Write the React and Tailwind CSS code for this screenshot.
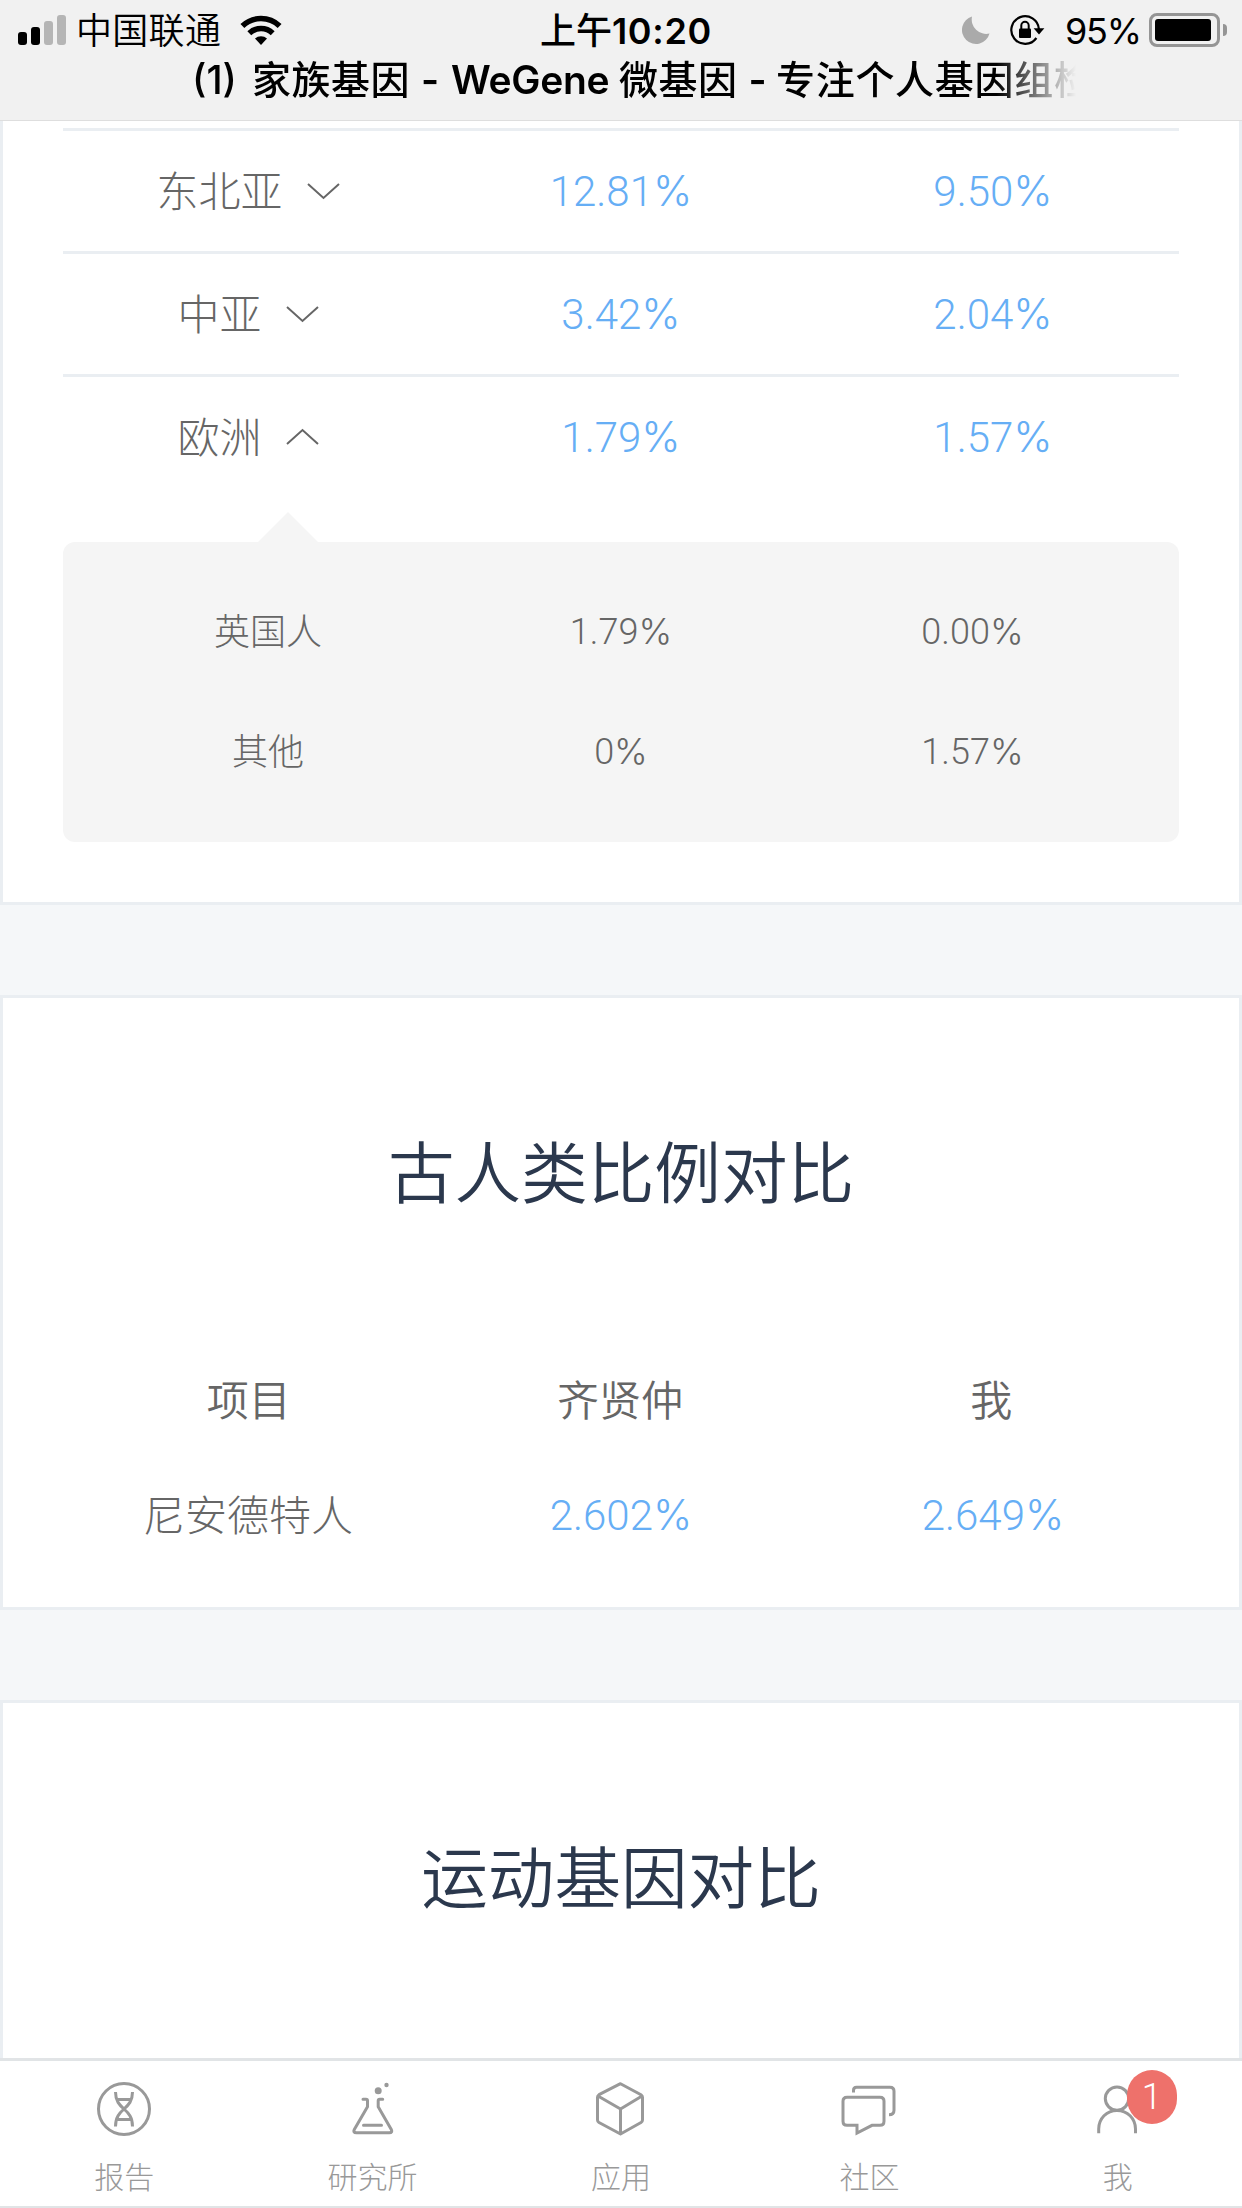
const CJK = "font-['Roboto','Noto_Sans_CJK_SC',sans-serif]";

const regions = [
  { name: '东北亚', a: '12.81', b: '9.50', open: false },
  { name: '中亚', a: '3.42', b: '2.04', open: false },
  { name: '欧洲', a: '1.79', b: '1.57', open: true },
];

const details = [
  { name: '英国人', a: '1.79', b: '0.00' },
  { name: '其他', a: '0', b: '1.57' },
];

function Chevron({ up }) {
  return (
    <svg width="33" height="18" viewBox="0 0 33 18" fill="none" stroke="#666" strokeWidth="2" className="mb-[4px] ml-6">
      <path d={up ? 'M1 16 16.5 2 32 16' : 'M1 2 16.5 16 32 2'} />
    </svg>
  );
}

function Percent({ value }) {
  return (
    <span>
      {value}
      <span className="font-['Inter',sans-serif]">%</span>
    </span>
  );
}

function SignalBars() {
  return (
    <div className="flex h-[30px] items-end gap-1">
      <span className="h-[13px] w-[9px] rounded-[3px] bg-black" />
      <span className="h-[18px] w-[9px] rounded-[3px] bg-black" />
      <span className="h-6 w-[9px] rounded-[3px] bg-[#b5b5b5]" />
      <span className="h-[30px] w-[9px] rounded-[3px] bg-[#b5b5b5]" />
    </div>
  );
}

function Wifi() {
  return (
    <svg width="42" height="30" viewBox="0 0 42 30">
      <path d="M21 30 15 23.6a8.6 8.6 0 0 1 12 0Z" />
      <g fill="none" stroke="#000" strokeWidth="5.6">
        <path d="M9.3 18.2a17 17 0 0 1 23.4 0" />
        <path d="M2.4 11a27 27 0 0 1 37.2 0" />
      </g>
    </svg>
  );
}

function Moon() {
  return (
    <svg width="28" height="28" viewBox="0 0 28 28">
      <path fill="#aaa" d="M10 0.5A14 14 0 1 0 27.500 17.500 14.500 14.500 0 0 1 10 0.5Z" />
    </svg>
  );
}

function RotationLock() {
  return (
    <svg width="35" height="30" viewBox="0 0 35 30" fill="none" stroke="#000">
      <path strokeWidth="2.2" d="M28.9 14A13.8 13.8 0 1 0 26.4 23" />
      <path fill="#000" stroke="none" d="M23.6 13.3h10.8L29 19.6Z" />
      <rect x="9" y="13.6" width="12" height="9.4" rx="1" fill="#000" stroke="none" />
      <path strokeWidth="2" d="M11.3 14v-3.5a3.7 3.7 0 0 1 7.4 0V14" />
    </svg>
  );
}

function Battery() {
  return (
    <div className="flex items-center gap-[3px]">
      <div className="h-[34px] w-[71px] rounded-[8px] border-[3px] border-[#959595] p-[3px]">
        <div className="h-full w-[56px] rounded-[3px] bg-black" />
      </div>
      <div className="h-3 w-1 rounded-r-full bg-[#959595]" />
    </div>
  );
}

function StatusBar() {
  return (
    <div className="flex h-[60px] items-center justify-between pr-[15px] pl-[18px]">
      <div className="flex flex-1 items-center">
        <SignalBars />
        <span className="mt-[3px] ml-[10px] text-[36px] font-[350] leading-[60px] tracking-[0.3px]">中国联通</span>
        <span className="ml-[19px]"><Wifi /></span>
      </div>
      <div className="mt-[2px] pl-[7px] font-['Inter','Noto_Sans_CJK_SC',sans-serif] text-[36px] font-medium leading-[60px]">
        上午<span className="font-semibold tracking-[0.7px]">10:20</span>
      </div>
      <div className="flex flex-1 items-center justify-end">
        <Moon />
        <span className="ml-[20px]"><RotationLock /></span>
        <span className="mt-[2px] ml-[20px] w-[84px] font-['Inter',sans-serif] text-[36px] leading-[60px] tracking-[-1.2px]">95%</span>
        <Battery />
      </div>
    </div>
  );
}

function Row({ name, a, b, children, className }) {
  return (
    <div className={`grid grid-cols-3 items-center text-center ${className}`}>
      <div className="flex items-center justify-center pt-[3px] pr-[2px]">{name}{children}</div>
      <div className="text-[#66aef5]"><Percent value={a} /></div>
      <div className="text-[#66aef5]"><Percent value={b} /></div>
    </div>
  );
}

const tabs = [
  {
    label: '报告',
    icon: (
      <>
        <circle cx="30" cy="30" r="25.5" />
        <path d="M21.5 13c0 9 4 13 8.5 17s8.5 8 8.5 17.5M38.5 13c0 9-4 13-8.5 17s-8.5 8-8.5 17.5M23 20.5h14M23 40.5h14" />
      </>
    ),
  },
  {
    label: '研究所',
    icon: (
      <>
        <path strokeLinecap="round" strokeLinejoin="round" d="M20 20.3h3q1.500 0 1.500 1.500v6L11.300 50.500q-1.500 3.200 2 3.200h33q3.500 0 2-3.200L35.200 27.800v-6q0-1.500 1.500-1.500h3M20.500 46.300h18" />
        <circle cx="35.200" cy="11.700" r="3.500" fill="#999" stroke="none" />
        <circle cx="43.500" cy="6" r="2.200" fill="#999" stroke="none" />
      </>
    ),
  },
  {
    label: '应用',
    icon: (
      <path strokeLinejoin="round" d="M29.500 4.700 50 15.700q1.500 1 1.500 2.500V41q0 1.500-1.500 2.500L29.500 55 8 43.500Q6.500 42.500 6.500 41V18.200q0-1.500 1.500-2.500ZM7 17l22.500 13L51 17M29.500 30v25" />
    ),
  },
  {
    label: '社区',
    icon: (
      <path d="M8 18.300h33q4 0 4 4v20q0 4-4 4h-8L18 54v-7.700H8q-4 0-4-4v-20q0-4 4-4ZM14.500 13.500V11.200q0-3 3-3h33.500q4 0 4 4v19q0 4.500-5 4.500" />
    ),
  },
  {
    label: '我',
    badge: '1',
    icon: (
      <>
        <circle cx="29" cy="19.600" r="11.700" />
        <path d="M10.700 54.300V50c0-10.500 8-18.600 18.300-18.600S47.500 39.500 47.500 50v4.300" />
      </>
    ),
  },
];

function TabBar() {
  return (
    <nav className="grid h-[150px] shrink-0 grid-cols-5 border-t-[3px] border-b-2 border-[#e1e4e6] bg-white">
      {tabs.map((t) => (
        <div key={t.label} className="flex flex-col items-center pt-[18px]">
          <div className="relative">
            <svg width="60" height="60" viewBox="0 0 60 60" fill="none" stroke="#999" strokeWidth="3">{t.icon}</svg>
            {t.badge && (
              <span className="absolute -top-[9px] left-[39px] flex h-[54px] w-[50px] items-center justify-center rounded-full bg-[#ee716b] text-[36px] font-light text-white">
                {t.badge}
              </span>
            )}
          </div>
          <span className="mt-[17px] text-[30px] leading-[44px] font-light text-[#999]">{t.label}</span>
        </div>
      ))}
    </nav>
  );
}

export default function App() {
  return (
    <div className={`flex h-[2208px] w-[1242px] flex-col overflow-hidden bg-[#f5f7f9] text-[#666] ${CJK}`}>
      <header className="h-[121px] shrink-0 border-b border-[#dedede] bg-[#f1f1f1] text-black">
        <StatusBar />
        <div className="mr-[166px] ml-[192px] flex h-[58px] -mt-[9px] items-center overflow-hidden font-['Inter','Noto_Sans_CJK_SC',sans-serif] text-[39px] leading-[58px] font-medium whitespace-nowrap [mask-image:linear-gradient(to_right,#000_91%,transparent)]">
          <span className="w-[60px] shrink-0">(1)</span>
          <span className="w-[199px] shrink-0 tracking-[0.5px]">家族基因 <span className="font-semibold">-</span></span>
          <span className="w-[168px] shrink-0 font-semibold tracking-[-0.3px]">WeGene</span>
          <span className="w-[157px] shrink-0 tracking-[0.5px]">微基因 <span className="font-semibold">-</span></span>
          <span className="shrink-0 tracking-[0.7px]">专注个人基因组检</span>
        </div>
      </header>

      <section className="h-[784px] shrink-0 border-x-[3px] border-b-[3px] border-[#eaeef2] bg-white px-[60px] pt-[7px]">
        {regions.map((r) => (
          <Row key={r.name} {...r} className="h-[123px] border-t-[3px] border-[#eaeef2] text-[42px] font-light">
            <Chevron up={r.open} />
          </Row>
        ))}
        <svg width="60" height="30" viewBox="0 0 60 30" className="mt-[15px] ml-[195px] block">
          <path d="M0 30 30 0 60 30Z" fill="#f5f5f5" />
        </svg>
        <div className="h-[300px] rounded-xl bg-[#f5f5f5] pr-[30px] pl-[30px] pt-[30px]">
          {details.map((d) => (
            <div key={d.name} className="grid h-[120px] grid-cols-3 items-center text-center text-[36px] font-light">
              <div className="pt-[2px] pr-[2px]">{d.name}</div>
              <div className="pb-[2px]"><Percent value={d.a} /></div>
              <div className="pr-px pb-[2px]"><Percent value={d.b} /></div>
            </div>
          ))}
        </div>
      </section>

      <section className="mt-[90px] h-[615px] shrink-0 border-[3px] border-[#eaeef2] bg-white px-[60px] pt-[127px]">
        <h2 className="text-center text-[66.6px] leading-[100px] font-[350] text-[#2b384d]">古人类比例对比</h2>
        <div className="mt-[119px] grid h-[114px] grid-cols-3 items-center pr-[2px] text-center text-[42px] font-[350]">
          <div>项目</div>
          <div>齐贤仲</div>
          <div>我</div>
        </div>
        <Row name="尼安德特人" a="2.602" b="2.649" className="h-[114px] text-[42px] font-light" />
      </section>

      <section className="mt-[90px] h-[358px] shrink-0 border-x-[3px] border-t-[3px] border-[#eaeef2] bg-white pt-[127px]">
        <h2 className="text-center text-[66.6px] leading-[100px] font-[350] text-[#2b384d]">运动基因对比</h2>
      </section>

      <TabBar />
    </div>
  );
}
